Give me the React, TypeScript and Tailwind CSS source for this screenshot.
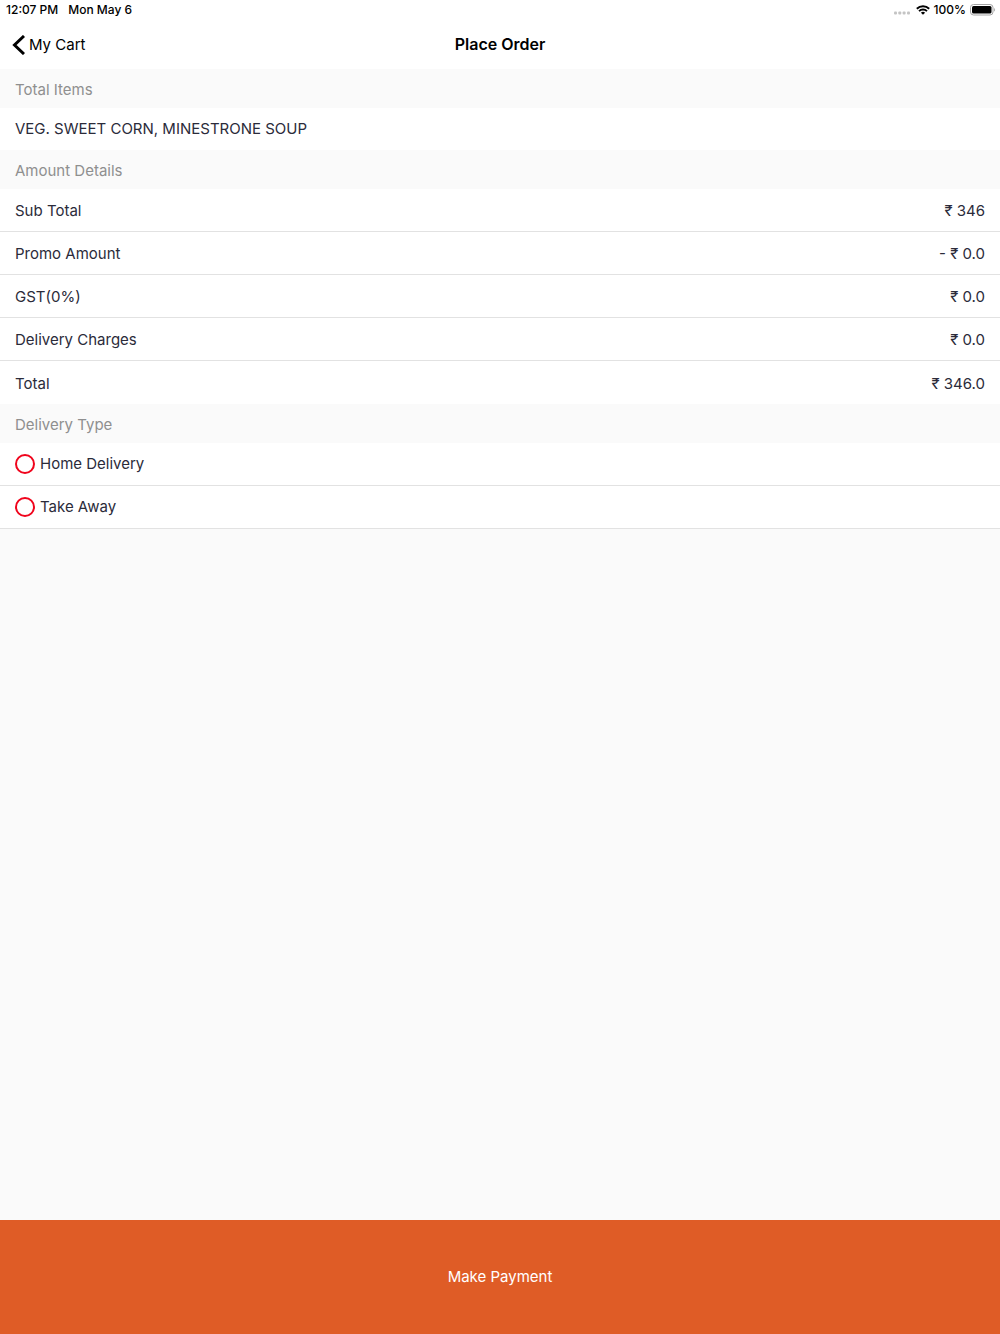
import { useState, type ReactNode } from "react"

const amounts = [
  { label: "Sub Total", value: "₹ 346" },
  { label: "Promo Amount", value: "- ₹ 0.0" },
  { label: "GST(0%)", value: "₹ 0.0" },
  { label: "Delivery Charges", value: "₹ 0.0" },
  { label: "Total", value: "₹ 346.0" },
]

const deliveryTypes = ["Home Delivery", "Take Away"]

function StatusBar() {
  return (
    <div className="flex h-5 items-center justify-between pr-1 pl-1.5 text-xs font-medium">
      <div className="flex gap-2.5">
        <span>12:07 PM</span>
        <span>Mon May 6</span>
      </div>
      <div className="flex items-center gap-1">
        <svg className="mt-1.5 mr-0.5 h-1 w-4" viewBox="0 0 16 4" fill="#c4c4c4">
          <rect x="0" y="0.5" width="3" height="3" rx="1" />
          <rect x="4.3" y="0.5" width="3" height="3" rx="1" />
          <rect x="8.6" y="0.5" width="3" height="3" rx="1" />
          <rect x="13" y="0.5" width="3" height="3" rx="1" />
        </svg>
        <svg className="h-2.5 w-3.5" viewBox="0 0 14 10" fill="none" stroke="black" strokeWidth="1.9">
          <path d="M0.8 3.7a8.9 8.9 0 0 1 12.4 0" />
          <path d="M3 6.1a5.8 5.8 0 0 1 8 0" />
          <path d="M7 9.8 4.9 7.8a3.1 3.1 0 0 1 4.2 0Z" fill="black" stroke="none" />
        </svg>
        <span>100%</span>
        <svg className="h-3 w-[26px]" viewBox="0 0 26 12" fill="none">
          <rect x="0.5" y="0.5" width="22.5" height="10.5" rx="3" stroke="#a3a3a3" />
          <rect x="2" y="2" width="19.5" height="7.5" rx="1.5" fill="black" />
          <path d="M24.2 4v3.6c1.2-.5 1.2-3.1 0-3.6Z" fill="#a3a3a3" />
        </svg>
      </div>
    </div>
  )
}

function SectionHeader({ children }: { children: ReactNode }) {
  return (
    <h2 className="flex h-[39px] items-center bg-[#fafafa] px-[15px] pt-0.5 text-[#8f8f8f]">
      {children}
    </h2>
  )
}

export default function App() {
  const [delivery, setDelivery] = useState("")

  return (
    <div className="flex min-h-screen flex-col bg-[#fafafa] font-['Inter',sans-serif] text-[15px] leading-6 text-[#2b2b3a]">
      <header className="bg-white text-black">
        <StatusBar />
        <div className="grid h-[49px] grid-cols-3 items-center px-3">
          <button type="button" className="flex items-center gap-1 justify-self-start">
            <svg className="h-5 w-[13px]" viewBox="0 0 13 20" fill="none" stroke="black" strokeWidth="3">
              <path d="M12 1 2.5 10 12 19" />
            </svg>
            My Cart
          </button>
          <h1 className="pb-0.5 text-center text-base font-semibold">Place Order</h1>
        </div>
      </header>

      <main className="grow">
        <SectionHeader>Total Items</SectionHeader>
        <p className="flex h-[42px] items-center bg-white px-[15px]">
          VEG. SWEET CORN, MINESTRONE SOUP
        </p>

        <SectionHeader>Amount Details</SectionHeader>
        <dl className="divide-y divide-[#e2e2e2] bg-white">
          {amounts.map((row) => (
            <div key={row.label} className="flex h-[43px] items-center justify-between px-[15px] pt-0.5">
              <dt>{row.label}</dt>
              <dd>{row.value}</dd>
            </div>
          ))}
        </dl>

        <SectionHeader>Delivery Type</SectionHeader>
        {deliveryTypes.map((type) => (
          <label
            key={type}
            className="flex h-[43px] items-center gap-[5px] border-b border-[#e2e2e2] bg-white px-[15px]"
          >
            <input
              type="radio"
              name="delivery"
              value={type}
              checked={delivery === type}
              onChange={() => setDelivery(type)}
              className="size-5 appearance-none rounded-full border-2 border-[#f0041c] checked:border-[6px]"
            />
            {type}
          </label>
        ))}
      </main>

      <button type="button" className="h-[114px] w-full bg-[#df5c26] text-white">
        Make Payment
      </button>
    </div>
  )
}
